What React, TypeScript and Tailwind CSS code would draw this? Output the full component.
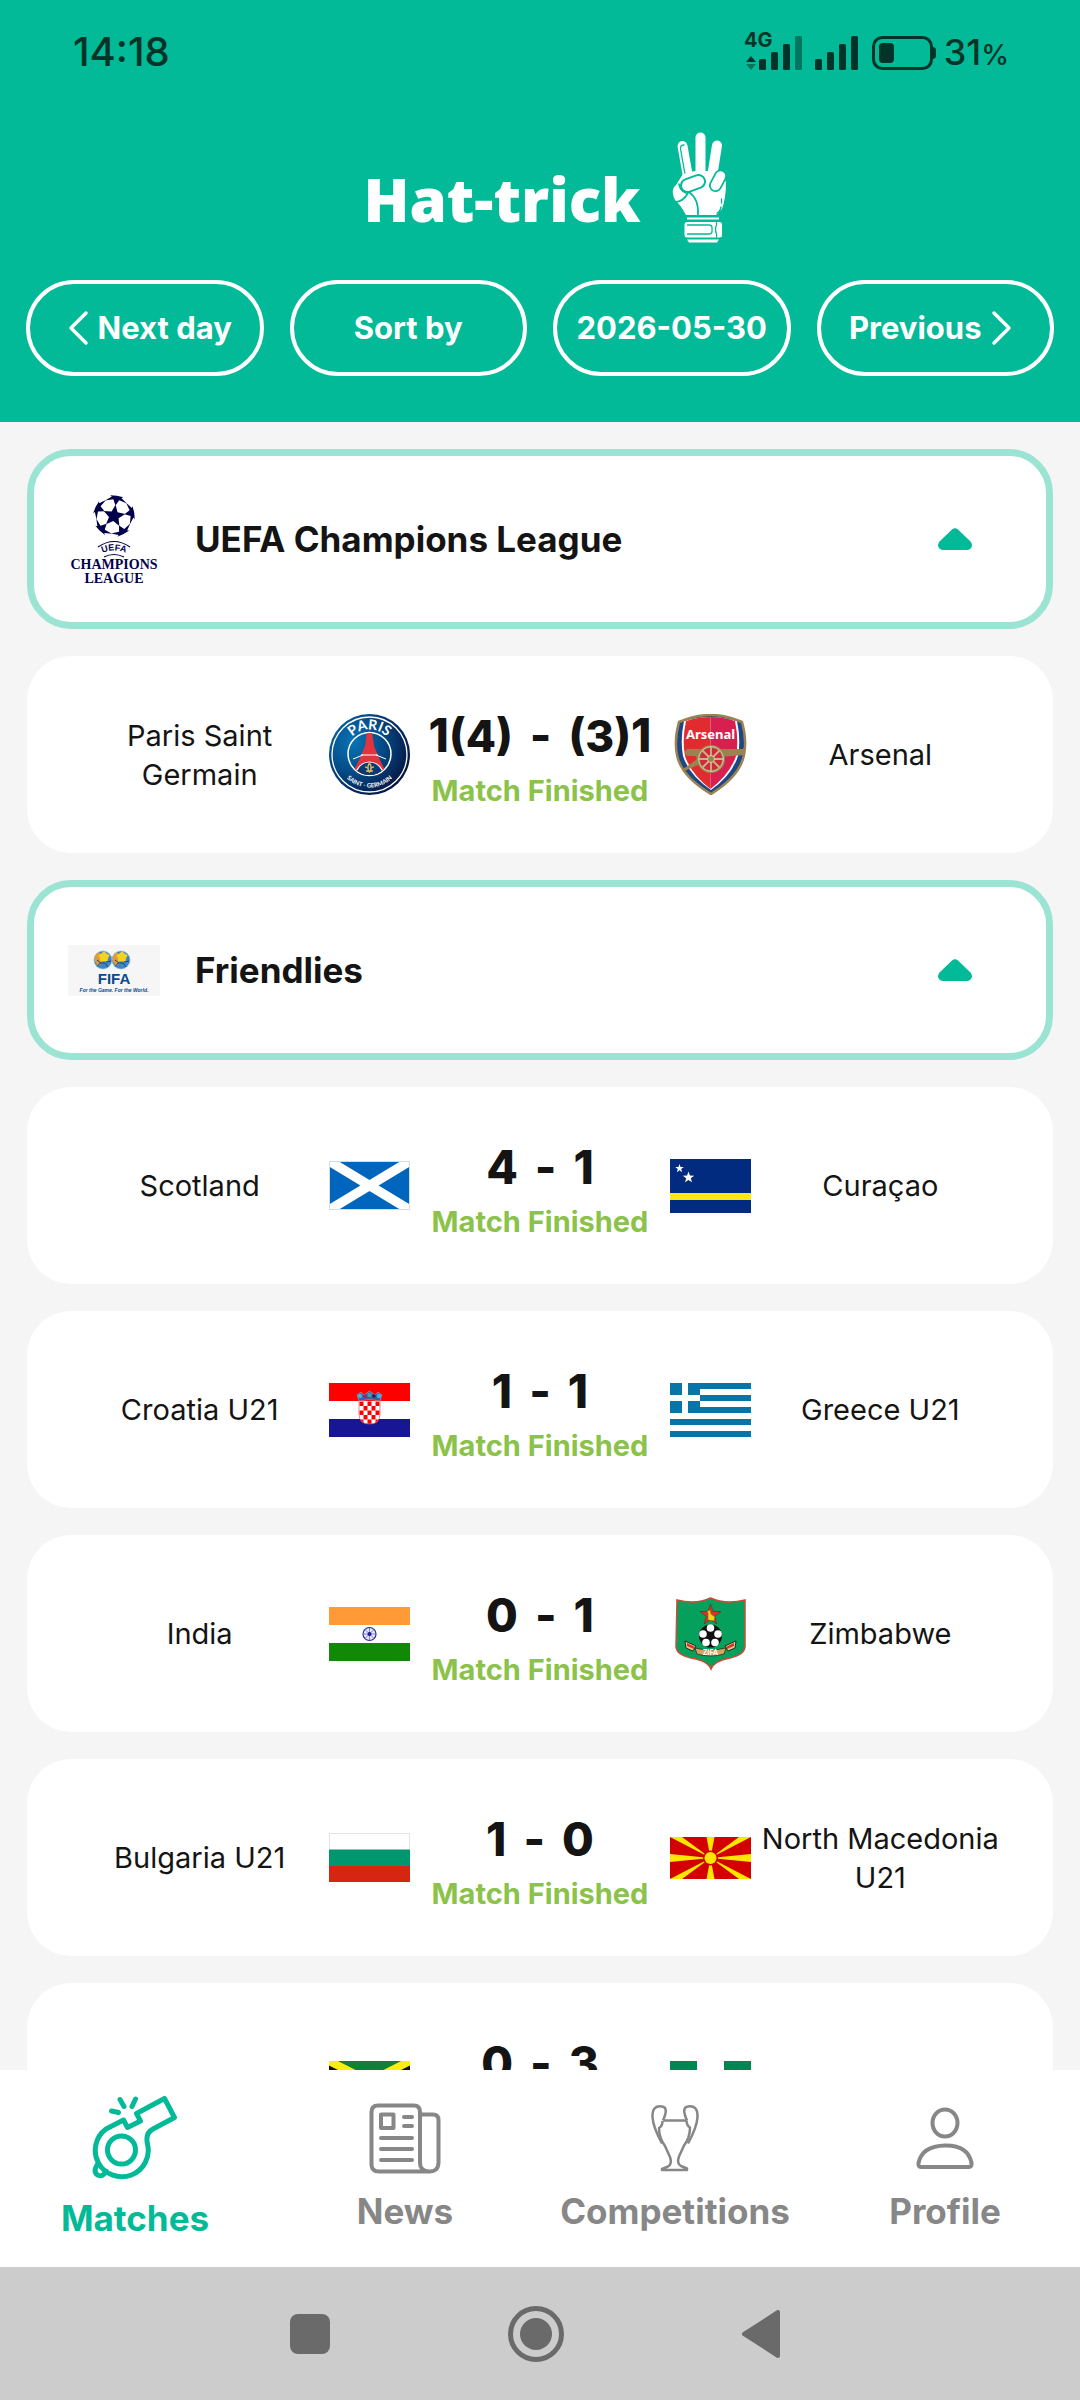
import type { ReactNode } from "react";
import clsx from "clsx";

type Team = { name: string; crest: ReactNode };
type Goals = { goals: number; pens?: number };
type Match = { id: string; home: Team; away: Team; result: [Goals, Goals] };
type League = { id: string; title: string; logo: ReactNode; matches: Match[] };

/* ---------- helpers ---------- */

const starPoints = (cx: number, cy: number, r: number, inner = 0.4) =>
  Array.from({ length: 10 }, (_, i) => {
    const a = (Math.PI / 5) * i - Math.PI / 2;
    const d = i % 2 ? r * inner : r;
    return `${(cx + d * Math.cos(a)).toFixed(2)},${(cy + d * Math.sin(a)).toFixed(2)}`;
  }).join(" ");

// stars laid on a sphere, seen from the front
const ballStars = (cx: number, cy: number, r: number, tilt: number) => {
  const rad = Math.PI / 180;
  const centers = [null, 0, 72, 144, 216, 288] as (number | null)[];
  return centers.map((deg) => {
    const t = deg === null ? 0 : 63.43 * rad;
    const p = ((deg ?? 0) + tilt) * rad;
    const c = [Math.sin(t) * Math.sin(p), -Math.sin(t) * Math.cos(p), Math.cos(t)];
    // u points back to the pole, v runs sideways
    const s = deg === null ? -1 : 1;
    const u = [-Math.cos(t) * Math.sin(p) * s, Math.cos(t) * Math.cos(p) * s];
    const v = [Math.cos(p), Math.sin(p)];
    return Array.from({ length: 10 }, (_, i) => {
      const th = (i % 2 ? 14 : 33) * rad;
      const f = i * 36 * rad;
      const x = Math.cos(th) * c[0] + Math.sin(th) * (Math.cos(f) * u[0] + Math.sin(f) * v[0]);
      const y = Math.cos(th) * c[1] + Math.sin(th) * (Math.cos(f) * u[1] + Math.sin(f) * v[1]);
      return `${(cx + r * x).toFixed(2)},${(cy + r * y).toFixed(2)}`;
    }).join(" ");
  });
};

/* ---------- league logos ---------- */

function ChampionsLogo() {
  return (
    <svg viewBox="0 0 92 92" className="w-full" fill="#02024a" aria-hidden="true">
      {ballStars(46, 23, 21, 8).map((pts) => (
        <polygon key={pts} points={pts} />
      ))}
      <path d="M30 54Q46 43 62 54M36 64Q46 59 56 64" fill="none" stroke="#02024a" strokeWidth="1.2" />
      <path id="uefa-arc" d="M30 62Q46 53 62 62" fill="none" />
      <text fontFamily="Liberation Sans" fontWeight="700" fontSize="9" textAnchor="middle">
        <textPath href="#uefa-arc" startOffset="50%">UEFA</textPath>
      </text>
      <g fontFamily="Liberation Serif" fontWeight="700" textAnchor="middle">
        <text x="46" y="76" fontSize="14">CHAMPIONS</text>
        <text x="46" y="90" fontSize="14">LEAGUE</text>
      </g>
    </svg>
  );
}

function FifaLogo() {
  return (
    <svg viewBox="0 0 92 51" className="w-full" aria-hidden="true">
      <rect width="92" height="51" fill="#f6f6f6" />
      {[35, 53].map((x) => (
        <g key={x}>
          <circle cx={x} cy="15" r="9" fill="#3f86c4" />
          <path d={`M${x - 9} 15a9 9 0 0 1 5 -8l3 4-1 8-3 2z`} fill="#e39a3a" />
          <polygon points={starPoints(x + 1, 12, 6, 0.7)} fill="#f5d21f" />
          <path
            d={`M${x - 6} 22l3-4h5l3 4M${x + 3} 17l5-1M${x - 2} 18l-4-3`}
            fill="none"
            stroke="#174a86"
            strokeWidth="1"
          />
          <circle cx={x} cy="15" r="9" fill="none" stroke="#8fb4d4" strokeWidth="0.6" />
        </g>
      ))}
      <text x="46" y="39" fontFamily="Liberation Sans" fontWeight="700" fontSize="15" textAnchor="middle" fill="#0b4a8e">
        FIFA
      </text>
      <text x="46" y="47" fontFamily="Liberation Sans" fontStyle="italic" fontWeight="700" fontSize="5" textAnchor="middle" fill="#0b4a8e">
        For the Game. For the World.
      </text>
    </svg>
  );
}

/* ---------- club crests ---------- */

function ParisCrest() {
  return (
    <svg viewBox="0 0 81 81" className="w-full" aria-hidden="true">
      <defs>
        <radialGradient id="psg-blue" cx="0.3" cy="0.35" r="0.75">
          <stop offset="0" stopColor="#0a74b4" />
          <stop offset="0.5" stopColor="#044a86" />
          <stop offset="1" stopColor="#071440" />
        </radialGradient>
        <clipPath id="psg-inner">
          <circle cx="40.5" cy="40" r="21" />
        </clipPath>
      </defs>
      <circle cx="40.5" cy="40.5" r="40.5" fill="url(#psg-blue)" />
      <circle cx="40.5" cy="40.5" r="37.5" fill="none" stroke="#fff" strokeWidth="1.3" />
      <circle cx="40.5" cy="40" r="21.5" fill="none" stroke="#fff" strokeWidth="1.5" />
      <g clipPath="url(#psg-inner)">
        <path d="M38 18h5l2 14 5 12 9 18H22l9-18 5-12z" fill="#e2343f" />
        <path d="M32 41h17M24 45l10-4M57 45l-10-4" stroke="#fff" strokeWidth="1" />
        <path d="M26 64a14.500 16 0 0 1 29 0z" fill="#0b3a72" stroke="#fff" strokeWidth="1.2" />
        <path d="M40.5 49q3 4 0 9q-3-5 0-9M36 53q4 0 3 5M45 53q-4 0-3 5M37 57h7" fill="none" stroke="#d9b65a" strokeWidth="1.3" />
      </g>
      <path id="psg-top" d="M16 40A24.5 24.5 0 0 1 65 40" fill="none" />
      <path id="psg-bottom" d="M8 41A32.5 32.5 0 0 0 73 41" fill="none" />
      <text fontFamily="Lato" fontWeight="700" fontSize="14" fill="#fff" textAnchor="middle">
        <textPath href="#psg-top" startOffset="50%">PARIS</textPath>
      </text>
      <text fontFamily="Lato" fontWeight="700" fontSize="6" fill="#fff" textAnchor="middle">
        <textPath href="#psg-bottom" startOffset="50%">SAINT - GERMAIN</textPath>
      </text>
    </svg>
  );
}

function ArsenalCrest() {
  const shield = "M9 8Q25 1 40.5 1T72 8Q77 26 74 41Q70 62 41 80Q11 62 7 41Q4 26 9 8Z";
  return (
    <svg viewBox="0 0 81 81" className="w-full" aria-hidden="true">
      <defs>
        <clipPath id="afc-shield">
          <path d={shield} />
        </clipPath>
      </defs>
      <path d={shield} fill="#1d4686" />
      <path d="M14 7Q28 3 40.5 3T67 7Q71 26 68 42Q62 61 41 76Q19 61 13 42Q10 26 14 7Z" fill="#fff" />
      <path d="M16 7Q28 3 40.5 3V75Q21 60 15 42Q12 26 16 7Z" fill="#e22b2e" />
      <path d="M40.5 3Q54 3 65 7Q69 26 66 42Q60 60 40.5 75Z" fill="#d71f50" />
      <path d={shield} fill="none" stroke="#9a8350" strokeWidth="2.5" />
      <text x="40.5" y="25" fontFamily="Noto Sans" fontWeight="700" fontSize="13" fill="#fff" textAnchor="middle">
        Arsenal
      </text>
      <g clipPath="url(#afc-shield)" fill="#9a8350">
        <path d="M17 35h55l3-1v7l-25 2L28 51 10 59l3-4 13-9q2-4-2-4h-7q-4-3 0-7z" />
      </g>
      <circle cx="41" cy="45" r="12.5" fill="#d3293f" stroke="#9a8350" strokeWidth="3" />
      <circle cx="41" cy="45" r="12.5" fill="none" stroke="#e9dcb8" strokeWidth="0.8" />
      <path d="M41 33v24M29 45h24M32.5 36.5l17 17M49.5 36.5l-17 17" stroke="#c9b583" strokeWidth="1.8" />
      <circle cx="41" cy="45" r="3.5" fill="#9a8350" stroke="#e9dcb8" strokeWidth="0.8" />
    </svg>
  );
}

function ZimbabweCrest() {
  return (
    <svg viewBox="0 0 81 81" className="w-full" aria-hidden="true">
      <path
        d="M7 7Q26 12 40.5 5Q56 12 75 7V54Q74 62 60 65Q44 68 41 76Q38 68 21 65Q7 62 6 54Z"
        fill="#05a05c"
        stroke="#cc4a35"
        strokeWidth="1.5"
      />
      <polygon points={starPoints(40.5, 22, 11)} fill="#d8352a" stroke="#5c1d14" strokeWidth="0.5" />
      <path d="M38 27v-7l-1-2 3-1 1 4 4 3-1 4z" fill="#f2d31c" stroke="#6b5410" strokeWidth="0.5" />
      <circle cx="40.5" cy="43" r="11.5" fill="#111" />
      <circle cx="40.5" cy="35" r="3.8" fill="#fff" />
      <circle cx="33" cy="41" r="3.8" fill="#fff" />
      <circle cx="48" cy="41" r="3.8" fill="#fff" />
      <circle cx="36" cy="49.5" r="3.8" fill="#fff" />
      <circle cx="45" cy="49.5" r="3.8" fill="#fff" />
      <polygon points="40.5,39 44,42 42.5,46 38.5,46 37,42" fill="#111" />
      <path d="M15 48l11 5-3 5-7-3zM66 48l-11 5 3 5 7-3z" fill="#e8c98d" stroke="#111" strokeWidth="0.8" />
      <path d="M17 50l8 4-1 2-7-3zM64 50l-8 4 1 2 7-3z" fill="#d8352a" />
      <path d="M25 55q15 4 31 0l-2 6q-13 4-27 0z" fill="#d9a55e" stroke="#111" strokeWidth="0.6" />
      <text x="40.5" y="62" fontFamily="Lato" fontWeight="900" fontSize="7" fill="#fff" textAnchor="middle">
        ZIFA
      </text>
    </svg>
  );
}

/* ---------- flags ---------- */

function Flag({ h, children }: { h: number; children: ReactNode }) {
  return (
    <svg viewBox={`0 0 81 ${h}`} className="w-full" aria-hidden="true">
      {children}
    </svg>
  );
}

const Scotland = (
  <Flag h={49}>
    <rect width="81" height="49" fill="#0065bd" />
    <path d="M0 0L81 49M81 0L0 49" stroke="#fff" strokeWidth="9.5" />
    <rect x="0.5" y="0.5" width="80" height="48" fill="none" stroke="#d5dbe2" />
  </Flag>
);

const Curacao = (
  <Flag h={54}>
    <rect width="81" height="54" fill="#002b7f" />
    <rect y="34" width="81" height="7" fill="#f9e814" />
    <polygon points={starPoints(9.5, 9.5, 4.5)} fill="#fff" />
    <polygon points={starPoints(18.5, 18.5, 6)} fill="#fff" />
  </Flag>
);

const Croatia = (
  <Flag h={54}>
    <rect width="81" height="54" fill="#fff" />
    <rect width="81" height="18" fill="#ff0000" />
    <rect y="36" width="81" height="18" fill="#171796" />
    <defs>
      <clipPath id="hr-shield">
        <path d="M30 18h21v13q0 10-10.5 10T30 31z" />
      </clipPath>
    </defs>
    <g clipPath="url(#hr-shield)">
      <rect x="30" y="17" width="22" height="25" fill="#fff" />
      {Array.from({ length: 25 }, (_, i) => i)
        .filter((i) => i % 2 === 0)
        .map((i) => (
          <rect key={i} x={30.5 + (i % 5) * 4} y={18.5 + Math.floor(i / 5) * 4.5} width="4" height="4.5" fill="#f00" />
        ))}
    </g>
    <path d="M30 18v13q0 10 10.5 10T51 31V18" fill="none" stroke="#f34a4a" strokeWidth="0.7" />
    <path d="M28 12l4-3 3 3 5.5-4 5.5 4 3-3 4 3-2 6q-10.5-3-21 0z" fill="#3a5fa5" stroke="#fff" strokeWidth="0.3" />
    <circle cx="31" cy="13" r="2.2" fill="#3fb2dd" />
    <circle cx="36" cy="13" r="1.8" fill="#b01d5a" />
    <circle cx="40.5" cy="12" r="2.2" fill="#3fa0a5" />
    <circle cx="45" cy="13" r="1.8" fill="#1b1f5c" />
    <circle cx="50" cy="13" r="2.2" fill="#3fb2dd" />
  </Flag>
);

const Greece = (
  <Flag h={54}>
    <rect width="81" height="54" fill="#fff" />
    {[0, 12, 24, 36, 48].map((y) => (
      <rect key={y} y={y} width="81" height="6" fill="#0775a8" />
    ))}
    <rect width="30" height="30" fill="#0775a8" />
    <path d="M15 0v30M0 15h30" stroke="#fff" strokeWidth="6" />
  </Flag>
);

const India = (
  <Flag h={54}>
    <rect width="81" height="54" fill="#fff" />
    <rect width="81" height="18" fill="#ff9a36" />
    <rect y="36" width="81" height="18" fill="#128807" />
    <circle cx="40.5" cy="27" r="6.5" fill="#e6e6f7" stroke="#2a2a9c" strokeWidth="1.2" />
    <path
      d="M40.5 21v12M34.5 27h12M36.3 22.8l8.4 8.4M44.7 22.8l-8.4 8.4"
      stroke="#5a5ab8"
      strokeWidth="0.7"
    />
    <circle cx="40.5" cy="27" r="2" fill="#1c1c90" />
  </Flag>
);

const Bulgaria = (
  <Flag h={49}>
    <rect width="81" height="49" fill="#fff" />
    <rect y="16.5" width="81" height="16.5" fill="#00966e" />
    <rect y="33" width="81" height="16" fill="#d62612" />
    <path d="M0.5 16V0.5h80V16" fill="none" stroke="#e4e4e4" />
  </Flag>
);

const NorthMacedonia = (
  <Flag h={42}>
    <rect width="81" height="42" fill="#d20000" />
    <path
      d="M0 0h12l28.5 21zM81 0H69L40.5 21zM0 42h12l28.5-21zM81 42H69L40.5 21zM36.5 0h8l-4 21zM36.5 42h8l-4-21zM0 17v8l40.5-4zM81 17v8l-40.5-4z"
      fill="#ffe600"
    />
    <circle cx="40.5" cy="21" r="7.5" fill="#d20000" />
    <circle cx="40.5" cy="21" r="6" fill="#ffe600" />
  </Flag>
);

const Jamaica = (
  <Flag h={41}>
    <rect width="81" height="41" fill="#111" />
    <path d="M0 0h81L40.5 20.5zM0 41h81L40.5 20.5z" fill="#0f7f3c" />
    <path d="M0 0L81 41M81 0L0 41" stroke="#f9ee10" strokeWidth="8" />
  </Flag>
);

const Nigeria = (
  <Flag h={41}>
    <rect width="81" height="41" fill="#fff" />
    <rect width="27" height="41" fill="#008751" />
    <rect x="54" width="27" height="41" fill="#008751" />
  </Flag>
);

/* ---------- header ---------- */

function HandIcon() {
  return (
    <svg viewBox="330 21 55 111" className="w-[55px]" fill="#fff" aria-hidden="true">
      <g strokeLinecap="round" fill="none">
        <path d="M340.5 35L346 66" stroke="#fff" strokeWidth="10" />
        <path d="M338.5 38Q338 34 342 34M338.5 38l4.5 25" stroke="#02ba98" strokeWidth="1.3" />
        <path d="M358.5 26.5V66" stroke="#fff" strokeWidth="10" />
        <path d="M375 34.5L370 66" stroke="#fff" strokeWidth="10" />
      </g>
      <path d="M341 63l12-3h18l7 2 6 9q0 16-4 27l-6 6h-30q-6-11-11-15-5-10 1-15z" />
      <g strokeLinecap="round" fill="none">
        <path d="M373.5 74.5l5-9.5" stroke="#02ba98" strokeWidth="13" />
        <path d="M373.5 74.5l5-9.5" stroke="#fff" strokeWidth="9.5" />
        <path d="M345.5 74.5l11-4" stroke="#02ba98" strokeWidth="15" />
        <path d="M345.5 74.5l11-4" stroke="#fff" strokeWidth="11" />
        <path d="M337 73q1 7 7 9M333 91q8 0 13-9M347 81q10 7 9 23" stroke="#02ba98" strokeWidth="1.7" />
        <path d="M379.5 88v4M379 96q-1 5-4 6" stroke="#02ba98" strokeWidth="1.3" />
      </g>
      <path d="M345 106.500h32v2h-32z" />
      <rect x="342.5" y="111" width="37.5" height="15.5" rx="2.5" />
      <path d="M345 114h22q3 0 3 2.5v4q0 2.5-3 2.5h-22M374.5 111v3q-2 4 0 9v3.5" fill="none" stroke="#02ba98" strokeWidth="1.3" />
      <path d="M345 128.5h32l-2 3h-28z" />
    </svg>
  );
}

function StatusBar() {
  return (
    <div className="flex h-[104px] items-center justify-between pr-[71px] pl-[73px] text-[#003428]">
      <time className="text-[40px] leading-none font-medium">14:18</time>
      <div className="flex items-center gap-2">
        <svg viewBox="0 0 192 48" className="w-[192px]" fill="currentColor" aria-hidden="true">
          <text x="0" y="19" fontFamily="Inter" fontWeight="700" fontSize="20">4G</text>
          <path d="M7 28l5 6H2z" />
          <path d="M7 42l5-6H2z" opacity="0.5" />
          <rect x="15" y="31" width="7" height="11" rx="1.5" />
          <rect x="27" y="24" width="7" height="18" rx="1.5" />
          <rect x="39" y="16" width="7" height="26" rx="1.5" />
          <rect x="51" y="8" width="7" height="34" rx="1.5" opacity="0.5" />
          <rect x="71" y="31" width="7" height="11" rx="1.5" />
          <rect x="83" y="24" width="7" height="18" rx="1.5" />
          <rect x="95" y="16" width="7" height="26" rx="1.5" />
          <rect x="107" y="8" width="7" height="34" rx="1.5" />
          <rect x="129.5" y="9.5" width="58" height="31" rx="9" fill="none" stroke="currentColor" strokeWidth="3" />
          <rect x="135" y="15" width="15" height="20" rx="4" />
          <path d="M188 19q4 0 4 3v6q0 3-4 3z" />
        </svg>
        <span className="text-[36px] leading-none font-medium">
          31<span className="text-[28px]">%</span>
        </span>
      </div>
    </div>
  );
}

function Chevron({ dir }: { dir: "left" | "right" }) {
  return (
    <svg viewBox="0 0 32 36" className="w-8 shrink-0" fill="none" stroke="currentColor" strokeWidth="3.5" strokeLinecap="round" strokeLinejoin="round" aria-hidden="true">
      <path d={dir === "left" ? "M28 3L13 18l15 15" : "M4 3l15 15L4 33"} />
    </svg>
  );
}

function PillButton({ children }: { children: ReactNode }) {
  return (
    <button
      type="button"
      className="flex h-24 flex-1 items-center justify-center gap-2 rounded-full border-4 border-white text-[31px] font-bold whitespace-nowrap text-white"
    >
      {children}
    </button>
  );
}

/* ---------- list ---------- */

function LeagueHeader({ title, logo }: { title: string; logo: ReactNode }) {
  return (
    <button
      type="button"
      aria-expanded="true"
      className="flex h-[180px] w-full shrink-0 items-center gap-[35px] rounded-[44px] border-[7px] border-[#9be4d4] bg-white pr-[74px] pl-[34px] text-left"
    >
      <span className="w-[92px]">{logo}</span>
      <span className="flex-1 text-[35px] font-bold">{title}</span>
      <svg viewBox="0 0 34 22" className="w-[34px]" fill="#02ba98" aria-hidden="true">
        <path d="M14 1.500q3-2.500 6 0l12.500 12q3 4 0 7-1.500 1.500-4 1.500h-23q-2.500 0-4-1.500-3-3 0-7z" />
      </svg>
    </button>
  );
}

function TeamName({ children }: { children: ReactNode }) {
  return <span className="text-center text-[29px] leading-[39px]">{children}</span>;
}

function Pens({ value }: { value?: number }) {
  if (value === undefined) return null;
  return <span className="text-[44px]">({value})</span>;
}

function MatchCard({ match }: { match: Match }) {
  const [home, away] = match.result;
  return (
    <li className="grid h-[197px] shrink-0 grid-cols-[1fr_81px_1fr_81px_1fr] items-center rounded-[44px] bg-white px-[43px]">
      <TeamName>{match.home.name}</TeamName>
      {match.home.crest}
      <div className="pt-3 text-center whitespace-nowrap">
        <p className="flex justify-center gap-[17px] text-[46px] leading-[60px] font-extrabold">
          <span>
            {home.goals}
            <Pens value={home.pens} />
          </span>
          <span>-</span>
          <span>
            <Pens value={away.pens} />
            {away.goals}
          </span>
        </p>
        <p className="text-[29px] leading-[50px] font-bold text-[#8bc34a]">Match Finished</p>
      </div>
      {match.away.crest}
      <TeamName>{match.away.name}</TeamName>
    </li>
  );
}

/* ---------- bottom nav ---------- */

const MatchesIcon = (
  <svg viewBox="92 36 86 86" className="w-[86px]" fill="none" stroke="currentColor" strokeWidth="5" strokeLinejoin="round" strokeLinecap="round" aria-hidden="true">
    <path d="M147.5 84Q145 73 153 69L174.5 57.5L164.5 38.5L136.5 53.5L140.5 61L127.5 67.5L123.5 60L106 69A26.5 26.5 0 1 0 147.5 84Z" />
    <circle cx="121.5" cy="90" r="14" />
    <path d="M120 39.5l4 7M135.5 39l-3.5 7.5M111.5 51l7 1.5" />
    <path d="M97 105q-4 7 .5 10 6 2.5 8.5-4" />
  </svg>
);

const NewsIcon = (
  <svg viewBox="369 42 72 72" className="w-[72px]" fill="none" stroke="currentColor" strokeWidth="4" strokeLinecap="round" strokeLinejoin="round" aria-hidden="true">
    <path d="M429 110.5H379q-7.5 0-7.5-7V51q0-6.5 6.5-6.5h36q6 0 6 6.5v51q0 8 9 8.5t9.5-8.5V59q0-5.5-5.5-5.5h-12.5" />
    <path d="M381 53.5h12.5v13.5H381zM404 56h8M404 65h8M381 77h31M381 88h31M381 99h31" />
  </svg>
);

const TrophyIcon = (
  <svg viewBox="99 43 72 72" className="w-[72px]" fill="none" stroke="currentColor" strokeWidth="2.5" strokeLinejoin="round" aria-hidden="true">
    <path d="M123.5 60.5h23M146.5 60.5q0 5 3.5 7 0 10-6 18l-5 11q-2.5 7 2 9.5l6 2.5v1.5h-25V109l6-2.500q4.500-2.500 2-9.500l-5-11q-6-8-6-18 3.500-2 3.500-7" />
    <path d="M123 60.5Q129 47 122 46.5Q112 45 112.5 57Q113 67 122 83.5M147 60.5Q141 47 148 46.5Q158 45 157.5 57Q157 67 148 83.5" />
  </svg>
);

const ProfileIcon = (
  <svg viewBox="369 42 72 72" className="w-[72px]" fill="none" stroke="currentColor" strokeWidth="4" strokeLinejoin="round" aria-hidden="true">
    <ellipse cx="405" cy="62" rx="12.5" ry="13.5" />
    <path d="M381 106q-3 0-2.5-4Q382 85 405 84.5T431.5 102q.5 4-2.5 4z" />
  </svg>
);

const tabs = [
  { label: "Matches", icon: MatchesIcon, active: true },
  { label: "News", icon: NewsIcon },
  { label: "Competitions", icon: TrophyIcon },
  { label: "Profile", icon: ProfileIcon },
];

function TabBar() {
  return (
    <nav className="grid h-[197px] shrink-0 grid-cols-4 bg-white">
      {tabs.map((t) => (
        <a
          key={t.label}
          href="#"
          className={clsx(
            "flex flex-col items-center justify-center gap-3 text-[35px] leading-[48px] font-bold",
            t.active ? "text-[#02ba98]" : "text-[#878787]"
          )}
        >
          {t.icon}
          {t.label}
        </a>
      ))}
    </nav>
  );
}

function SystemBar() {
  return (
    <div className="flex h-[133px] shrink-0 items-center justify-center gap-[178px] bg-[#cccccc] pr-[10px] text-[#6a6a6a]">
      <button type="button" aria-label="Recents" className="size-10 rounded-lg bg-current" />
      <button type="button" aria-label="Home" className="flex size-14 items-center justify-center rounded-full border-[5px] border-current">
        <span className="size-8 rounded-full bg-current" />
      </button>
      <button type="button" aria-label="Back">
        <svg viewBox="0 0 38 48" className="w-[38px]" fill="currentColor" stroke="currentColor" strokeWidth="4" strokeLinejoin="round" aria-hidden="true">
          <path d="M2 24L36 2v44z" />
        </svg>
      </button>
    </div>
  );
}

/* ---------- data ---------- */

const leagues: League[] = [
  {
    id: "ucl",
    title: "UEFA Champions League",
    logo: <ChampionsLogo />,
    matches: [
      {
        id: "psg-ars",
        home: { name: "Paris Saint Germain", crest: <ParisCrest /> },
        away: { name: "Arsenal", crest: <ArsenalCrest /> },
        result: [{ goals: 1, pens: 4 }, { goals: 1, pens: 3 }],
      },
    ],
  },
  {
    id: "friendlies",
    title: "Friendlies",
    logo: <FifaLogo />,
    matches: [
      {
        id: "sco-cuw",
        home: { name: "Scotland", crest: Scotland },
        away: { name: "Curaçao", crest: Curacao },
        result: [{ goals: 4 }, { goals: 1 }],
      },
      {
        id: "cro-gre",
        home: { name: "Croatia U21", crest: Croatia },
        away: { name: "Greece U21", crest: Greece },
        result: [{ goals: 1 }, { goals: 1 }],
      },
      {
        id: "ind-zim",
        home: { name: "India", crest: India },
        away: { name: "Zimbabwe", crest: <ZimbabweCrest /> },
        result: [{ goals: 0 }, { goals: 1 }],
      },
      {
        id: "bul-mkd",
        home: { name: "Bulgaria U21", crest: Bulgaria },
        away: { name: "North Macedonia U21", crest: NorthMacedonia },
        result: [{ goals: 1 }, { goals: 0 }],
      },
      {
        id: "jam-nga",
        home: { name: "Jamaica", crest: Jamaica },
        away: { name: "Nigeria", crest: Nigeria },
        result: [{ goals: 0 }, { goals: 3 }],
      },
    ],
  },
];

export default function App() {
  return (
    <div className="flex h-screen flex-col bg-[#f5f5f5] font-['Inter',sans-serif] text-[#141414]">
      <header className="shrink-0 bg-[#02ba98] pb-[46px]">
        <StatusBar />
        <div className="flex items-end justify-center gap-[31px] pt-7 pl-[10px] text-white">
          <h1 className="font-['Noto_Sans',sans-serif] text-[60px] leading-[88px] font-black">Hat-trick</h1>
          <HandIcon />
        </div>
        <div className="mt-[37px] flex gap-[26px] px-[26px]">
          <PillButton>
            <Chevron dir="left" />
            Next day
          </PillButton>
          <PillButton>Sort by</PillButton>
          <PillButton>2026-05-30</PillButton>
          <PillButton>
            Previous
            <Chevron dir="right" />
          </PillButton>
        </div>
      </header>

      <main className="flex min-h-0 flex-1 flex-col gap-[27px] overflow-y-auto px-[27px] pt-[27px] [scrollbar-width:none]">
        {leagues.map((league) => (
          <section key={league.id} className="flex shrink-0 flex-col gap-[27px]">
            <LeagueHeader title={league.title} logo={league.logo} />
            <ul className="flex flex-col gap-[27px]">
              {league.matches.map((m) => (
                <MatchCard key={m.id} match={m} />
              ))}
            </ul>
          </section>
        ))}
      </main>

      <TabBar />
      <SystemBar />
    </div>
  );
}
